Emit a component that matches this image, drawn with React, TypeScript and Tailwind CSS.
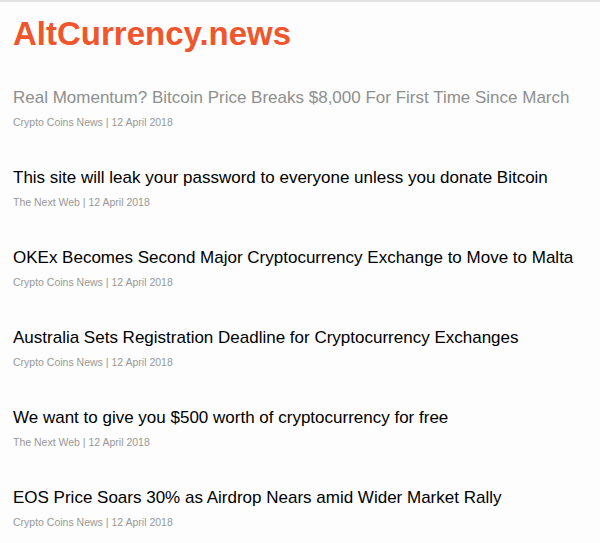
import React from 'react';

const articles = [
  { title: 'Real Momentum? Bitcoin Price Breaks $8,000 For First Time Since March', source: 'Crypto Coins News', date: '12 April 2018', visited: true },
  { title: 'This site will leak your password to everyone unless you donate Bitcoin', source: 'The Next Web', date: '12 April 2018' },
  { title: 'OKEx Becomes Second Major Cryptocurrency Exchange to Move to Malta', source: 'Crypto Coins News', date: '12 April 2018' },
  { title: 'Australia Sets Registration Deadline for Cryptocurrency Exchanges', source: 'Crypto Coins News', date: '12 April 2018' },
  { title: 'We want to give you $500 worth of cryptocurrency for free', source: 'The Next Web', date: '12 April 2018' },
  { title: 'EOS Price Soars 30% as Airdrop Nears amid Wider Market Rally', source: 'Crypto Coins News', date: '12 April 2018' },
];

const App = () => {
  return (
    <div className="min-h-[543px] bg-[#fcfdfc] border-t-2 border-[#e3e3e3] font-['Liberation_Sans',Arial,sans-serif]">
      <div className="px-[13px] pt-[12px]">
        {/* Logo */}
        <h1 className="text-[33px] leading-[40px] font-bold text-[#f0562d]">AltCurrency.news</h1>

        {/* Articles */}
        <ul className="mt-[33px] flex flex-col gap-[36px]">
          {articles.map((a) => (
            <li key={a.title}>
              <a
                href="#"
                className={`block whitespace-nowrap text-[17px] leading-[22px] ${a.visited ? 'text-[#8f8f8f]' : 'text-black'}`}
              >
                {a.title}
              </a>
              <p className="mt-[4px] text-[10.5px] leading-[18px] text-[#999999]">
                {a.source} | {a.date}
              </p>
            </li>
          ))}
        </ul>
      </div>
    </div>
  );
};

export default App;
